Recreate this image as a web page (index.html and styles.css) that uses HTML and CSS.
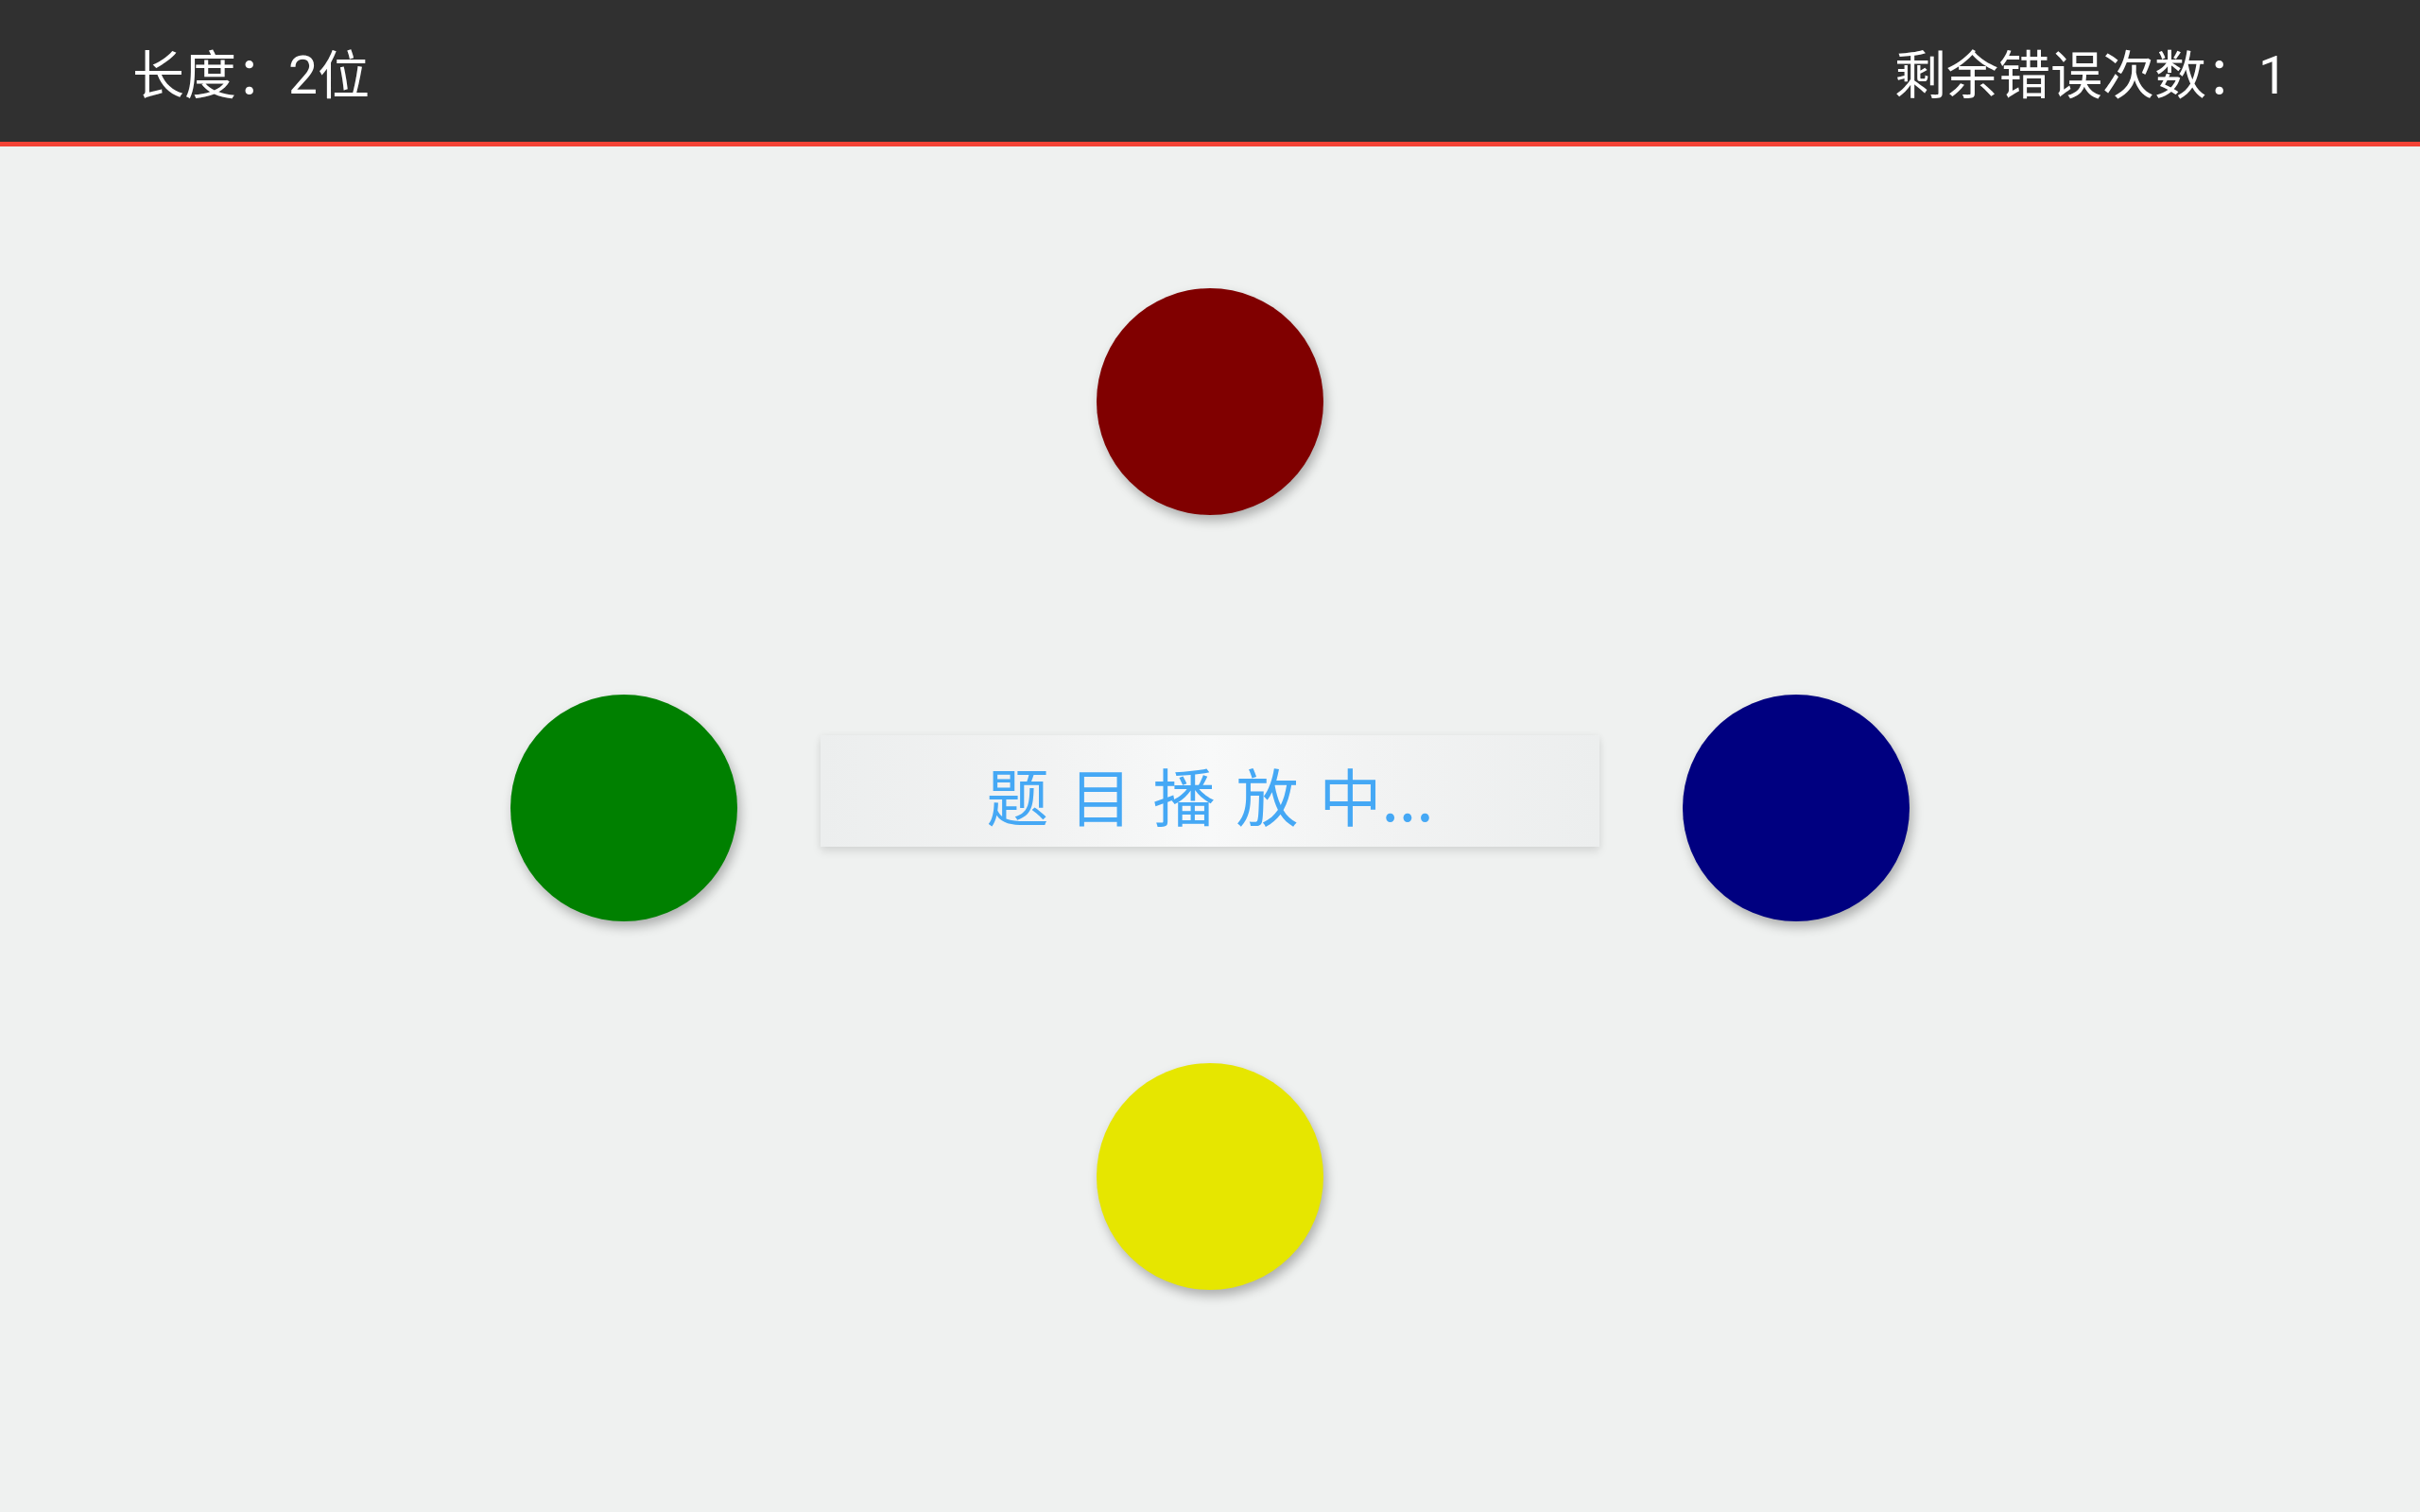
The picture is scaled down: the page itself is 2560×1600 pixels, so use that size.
FILE: index.html
```html
<!DOCTYPE html>
<html lang="zh-CN">
<head>
<meta charset="utf-8">
<title>题目播放中</title>
<link rel="stylesheet" href="styles.css">
</head>
<body>
<header class="topbar">
  <div class="stat">长度：2位</div>
  <div class="stat">剩余错误次数：1</div>
</header>
<main class="board">
  <div class="dot dot-red"></div>
  <div class="middle">
    <div class="dot dot-green"></div>
    <div class="banner"><span class="banner-text">题目播放</span><span class="banner-tail">中...</span></div>
    <div class="dot dot-blue"></div>
  </div>
  <div class="dot dot-yellow"></div>
</main>
</body>
</html>
```

FILE: styles.css
```css
html, body {
  margin: 0;
  padding: 0;
}
body {
  width: 2560px;
  height: 1600px;
  overflow: hidden;
  background: #eff1f0;
  font-family: Roboto, "Noto Sans CJK SC", sans-serif;
}
.topbar {
  background: #303030;
  border-bottom: 5px solid #f44336;
  display: flex;
  justify-content: space-between;
  align-items: center;
  padding: 10px 140px 0 140px;
  box-sizing: content-box;
  height: 140px;
}
.stat {
  color: #ffffff;
  font-size: 55px;
  line-height: 1;
}
.board {
  display: flex;
  flex-direction: column;
  align-items: center;
  padding-top: 150px;
}
.dot {
  width: 240px;
  height: 240px;
  border-radius: 50%;
  box-shadow: 3px 6px 12px rgba(0, 0, 0, 0.28);
  flex: none;
}
.dot-red { background: #800000; }
.dot-green { background: #008000; }
.dot-blue { background: #000080; }
.dot-yellow { background: #e6e600; margin-top: 150px; }
.middle {
  margin-top: 190px;
  display: flex;
  align-items: center;
  gap: 88px;
}
.banner {
  width: 824px;
  height: 118px;
  margin-bottom: 36px;
  display: flex;
  align-items: center;
  justify-content: center;
  background: linear-gradient(90deg, #eceeee 0%, #f2f3f3 30%, #f8f9f9 50%, #f2f3f3 70%, #eceeee 100%);
  box-shadow: 0 5px 9px rgba(0, 0, 0, 0.1), 0 0 8px rgba(0, 0, 0, 0.04);
  color: #45a8f5;
  font-family: "Noto Sans CJK SC", sans-serif;
  font-size: 66px;
  line-height: 1;
  padding-top: 6px;
  box-sizing: border-box;
}
.banner-text {
  letter-spacing: 22px;
}
.banner-tail {
  letter-spacing: 0;
}
```
